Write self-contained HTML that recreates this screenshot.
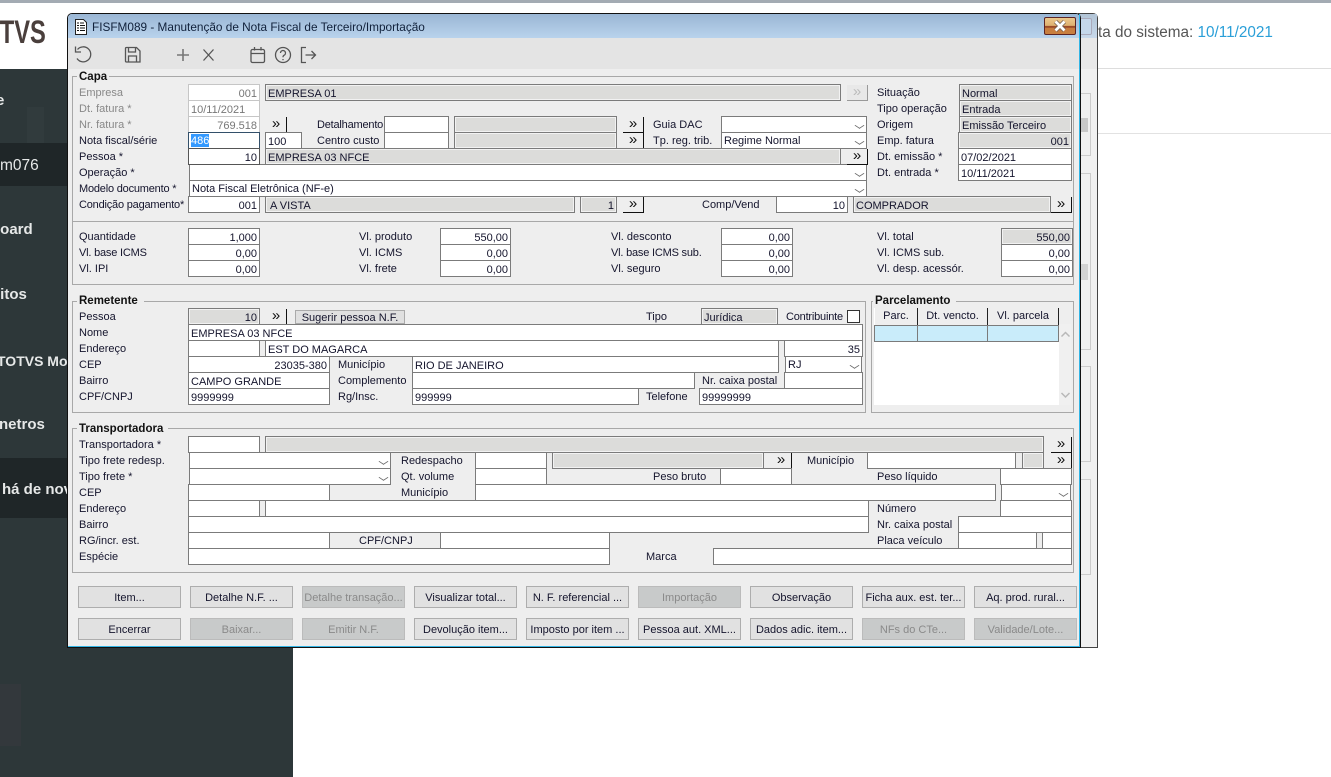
<!DOCTYPE html>
<html><head><meta charset="utf-8"><title>FISFM089</title>
<style>
html,body{margin:0;padding:0;background:#fff}
#p{position:relative;width:1331px;height:777px;overflow:hidden;background:#fff;font-family:"Liberation Sans",sans-serif}
#p div,#p svg{position:absolute;box-sizing:border-box}
.n{color:#e6e8e8;font-size:15px;font-weight:bold;white-space:nowrap;line-height:20px}
#w{left:67px;top:13px;width:1014px;height:635px;background:#eee;border:1px solid #111;border-radius:5px 5px 0 0;overflow:hidden}
#f{left:0;top:0;width:1331px;height:777px;font-size:11px;color:#14142c}
.l{height:16px;line-height:18px;white-space:nowrap}
.x{letter-spacing:-.2px}
.w,.g,.t{height:17px;line-height:18px;padding:0 2px;white-space:nowrap;overflow:hidden;border:1px solid #7b7b7b;background:#fff}
.g{background:#dcdcda;box-shadow:inset 0 0 0 1px #f2f2f2}
.t{border-color:#c6c6c6;color:#777}
.r{text-align:right}
.b{height:16px;width:21px;background:#eee;border-right:1px solid #111;border-bottom:1px solid #111;text-align:center;line-height:14px;font-size:15px;color:#111}
.s{height:17px;line-height:16px;padding:0 2px;background:#fff;border:1px solid #7b7b7b;white-space:nowrap}
.s:after{content:"";position:absolute;right:3px;top:5px;width:6px;height:6px;border-right:1px solid #666;border-bottom:1px solid #666;transform:scaleY(.65) rotate(45deg)}
.lg{font-weight:bold;background:#eee;padding:0 2px;height:14px;line-height:15px;color:#111;font-size:11.5px;white-space:nowrap}
.k{height:22px;width:103px;top:586px;background:#e1e1e1;border:1px solid #adadad;text-align:center;line-height:22px;white-space:nowrap;overflow:hidden;color:#14142c}
.d{background:#c8caca;border-color:#bbb;color:#8a8a8a}
.h{top:308px;height:17px;background:#eee;border-right:1px solid #222;text-align:center;line-height:17px}
.c{top:325px;height:17px;background:#c9ecfa;border:1px solid #7b7b7b}
.bx{left:1081px;width:10px;border:1px solid #ccc;border-left:0}
</style></head><body><div id="p">

<div style="left:0;top:0;width:1331px;height:3px;background:#a3abb3"></div>
<div style="left:1097px;top:68px;width:234px;height:1px;background:#ddd"></div>
<div style="left:1097px;top:133px;width:234px;height:1px;background:#e2e2e2"></div>
<div style="left:1098px;top:23px;font-size:15.3px;line-height:20px;color:#555;white-space:nowrap;width:233px;height:20px">ta do sistema: <span style="color:#2a9fd8">10/11/2021</span></div>

<div style="left:0;top:69px;width:293px;height:708px;background:#2d3739"></div>
<div style="left:27px;top:107px;width:17px;height:36px;background:#313b3d"></div>
<div style="left:0;top:684px;width:21px;height:62px;background:#33383c"></div>
<div style="left:0;top:143px;width:293px;height:43px;background:#1f2628"></div>
<div style="left:0;top:458px;width:293px;height:60px;background:#1f2628"></div>
<div style="left:-60px;top:12px;width:105px;height:40px;line-height:40px;font-size:32px;font-weight:bold;color:#4a3f3c;text-align:right;transform:scaleX(.74);transform-origin:right center">TOTVS</div>
<div class="n" style="left:-4px;top:91px;height:20px;width:20px">e</div>
<div class="n" style="left:0;top:156px;height:20px;width:60px;font-size:15.5px;font-weight:normal">m076</div>
<div class="n" style="left:-9px;top:220px;height:20px;width:60px">board</div>
<div class="n" style="left:-9px;top:285px;height:20px;width:60px">ditos</div>
<div class="n" style="left:-3px;top:351px;height:20px;width:90px;font-size:14px">TOTVS Mo</div>
<div class="n" style="left:-1px;top:415px;height:20px;width:70px">netros</div>
<div class="n" style="left:2px;top:480px;height:20px;width:90px">há de nov</div>

<div style="left:1078px;top:13px;width:20px;height:635px;background:#f0f0f0;border:1px solid #444;border-radius:0 5px 0 0"></div>
<div style="left:1079px;top:14px;width:18px;height:24px;background:linear-gradient(#b2c4d6,#c7d8ea)"></div>
<div style="left:1081px;top:18px;width:11px;height:17px;background:#c4d7ea;border:1px solid #aab;border-left:0;border-radius:0 2px 2px 0"></div>
<div style="left:1079px;top:38px;width:18px;height:31px;background:#e8e8e8"></div>
<div class="bx" style="top:93px;height:63px"></div>
<div style="left:1081px;top:118px;width:7px;height:14px;background:#c8c8c8"></div>
<div class="bx" style="top:173px;height:177px"></div>
<div style="left:1081px;top:264px;width:7px;height:16px;background:#d2d2d2"></div>
<div class="bx" style="top:366px;height:96px"></div>
<div class="bx" style="top:479px;height:96px"></div>

<div id="w"></div>
<div style="left:68px;top:14px;width:1012px;height:24px;background:linear-gradient(#9ab6d4,#b9d3ec);border-radius:4px 4px 0 0"></div>
<div style="left:68px;top:38px;width:1011px;height:31px;background:#e4e4e4"></div>
<div style="left:1079px;top:14px;width:1px;height:633px;background:#33b5e5"></div>
<div style="left:68px;top:646px;width:1012px;height:1px;background:#33b5e5"></div>

<svg style="left:74px;top:19px" width="14" height="16" viewBox="0 0 14 16"><path d="M1.500.5h8l3 3v12h-11z" fill="#fff" stroke="#222"/><path d="M3 4h2M6 4h4M3 6.500h2M6 6.500h5M3 9h2M6 9h5M3 11.500h2M6 11.500h5" stroke="#111" fill="none"/></svg>
<div style="left:92px;top:19px;width:400px;height:16px;line-height:16px;font-size:11.8px;color:#10203a;white-space:nowrap">FISFM089 - Manutenção de Nota Fiscal de Terceiro/Importação</div>
<div style="left:1044px;top:17px;width:32px;height:18px;border:1px solid #5c2424;border-radius:2px;background:linear-gradient(#ecc88c 0,#deb070 48%,#9a4a28 50%,#9a4a28 60%,#c67a3e 62%,#c98040 100%)"></div>
<svg style="left:1052px;top:20px" width="16" height="12" viewBox="0 0 16 12"><path d="M3.500 1.500l9 9M12.500 1.500l-9 9" stroke="#6b5a50" stroke-width="4.200" fill="none"/><path d="M3.500 1.500l9 9M12.500 1.500l-9 9" stroke="#fff" stroke-width="2.800" fill="none"/></svg>

<svg style="left:72px;top:44px" width="250" height="22" viewBox="0 0 250 22" fill="none" stroke="#555" stroke-width="1.300">
<path d="M5.500 5.500A7.500 7.500 0 1 1 5 14.500"/><path d="M3.500 2.500v5.500h5.500"/>
<path d="M54.500 3.500h10l3.500 3.500v11h-13.500q-1 0-1-1v-12.500q0-1 1-1z"/><path d="M56.500 3.500v4.500h7v-4.500M56.500 18.500v-6.500h8v6.500"/>
<path d="M111 5v12M105 11h12" stroke="#777" stroke-width="1.600"/>
<path d="M131.500 5.500l10 11M141.500 5.500l-10 11"/>
<rect x="179" y="5.500" width="13.500" height="13" rx="1.500"/><path d="M179 9.500h13.500M182.500 3v3.500M189 3v3.500"/>
<circle cx="211" cy="11" r="7.500"/><path d="M208.500 9a2.500 2.500 0 1 1 3.500 2.300q-1 .5-1 2"/><path d="M211 15v1.200"/>
<path d="M234 3.500h-4.500v15h4.500M233.500 11h10M239.500 7l4 4-4 4"/>
</svg>

<div id="f">
<!-- group frames -->
<div style="left:72px;top:76px;width:1002px;height:209px;border:1px solid #a8a8a8"></div>
<div style="left:72px;top:221px;width:1002px;height:1px;background:#a8a8a8"></div>
<div style="left:72px;top:301px;width:794px;height:112px;border:1px solid #a8a8a8"></div>
<div style="left:871px;top:301px;width:203px;height:112px;border:1px solid #a8a8a8"></div>
<div style="left:72px;top:428px;width:1002px;height:145px;border:1px solid #a8a8a8"></div>
<div class="lg" style="left:77px;top:70px;width:32px">Capa</div>
<div class="lg" style="left:77px;top:294px;width:67px">Remetente</div>
<div class="lg" style="left:873px;top:294px;width:83px">Parcelamento</div>
<div class="lg" style="left:77px;top:422px;width:91px">Transportadora</div>

<!-- capa labels -->
<div class="l" style="left:79px;top:84px;width:100px;color:#888">Empresa</div>
<div class="l" style="left:79px;top:100px;width:100px;color:#888">Dt. fatura *</div>
<div class="l" style="left:79px;top:116px;width:100px;color:#888">Nr. fatura *</div>
<div class="l" style="left:79px;top:132px;width:100px">Nota fiscal/série</div>
<div class="l" style="left:79px;top:148px;width:100px">Pessoa *</div>
<div class="l" style="left:79px;top:164px;width:100px">Operação *</div>
<div class="l x" style="left:79px;top:180px;width:105px">Modelo documento *</div>
<div class="l x" style="left:79px;top:196px;width:108px">Condição pagamento*</div>
<div class="l x" style="left:317px;top:116px;width:66px">Detalhamento</div>
<div class="l" style="left:317px;top:132px;width:66px">Centro custo</div>
<div class="l" style="left:653px;top:116px;width:66px">Guia DAC</div>
<div class="l" style="left:653px;top:132px;width:66px">Tp. reg. trib.</div>
<div class="l" style="left:702px;top:196px;width:66px">Comp/Vend</div>
<div class="l" style="left:877px;top:84px;width:76px">Situação</div>
<div class="l" style="left:877px;top:100px;width:76px">Tipo operação</div>
<div class="l" style="left:877px;top:116px;width:76px">Origem</div>
<div class="l" style="left:877px;top:132px;width:76px">Emp. fatura</div>
<div class="l" style="left:877px;top:148px;width:76px">Dt. emissão *</div>
<div class="l" style="left:877px;top:164px;width:76px">Dt. entrada *</div>

<!-- capa fields -->
<div class="t r" style="left:188px;top:84px;width:72px">001</div>
<div class="g" style="left:265px;top:84px;width:576px">EMPRESA 01</div>
<div class="b" style="left:847px;top:85px;color:#bbb;border-color:#999;background:#e8e8e8">»</div>
<div class="t" style="left:188px;top:100px;width:72px">10/11/2021</div>
<div class="t r" style="left:188px;top:116px;width:72px">769.518</div>
<div class="b" style="left:266px;top:117px">»</div>
<div class="w" style="left:384px;top:116px;width:65px"></div>
<div class="g" style="left:454px;top:116px;width:163px"></div>
<div class="b" style="left:623px;top:117px">»</div>
<div class="s" style="left:721px;top:116px;width:146px"></div>
<div class="w" style="left:188px;top:132px;width:72px;border-color:#33506a;padding:0"><div style="left:2px;top:1px;background:#3399ff;color:#fff;width:18px;height:13px;line-height:14px">486</div></div>
<div class="w" style="left:265px;top:132px;width:37px">100</div>
<div class="w" style="left:384px;top:132px;width:65px"></div>
<div class="g" style="left:454px;top:132px;width:163px"></div>
<div class="b" style="left:623px;top:133px">»</div>
<div class="s" style="left:721px;top:132px;width:146px">Regime Normal</div>
<div class="s" style="left:189px;top:164px;width:678px"></div>
<div class="s" style="left:189px;top:180px;width:678px">Nota Fiscal Eletrônica (NF-e)</div>
<div class="w r" style="left:188px;top:148px;width:72px;border-color:#555">10</div>
<div class="g" style="left:265px;top:148px;width:576px">EMPRESA 03 NFCE</div>
<div class="b" style="left:847px;top:149px">»</div>
<div class="w r" style="left:188px;top:196px;width:72px">001</div>
<div class="g" style="left:265px;top:196px;width:310px;padding-left:4px">A VISTA</div>
<div class="g r" style="left:580px;top:196px;width:37px">1</div>
<div class="b" style="left:623px;top:197px">»</div>
<div class="w r" style="left:776px;top:196px;width:72px">10</div>
<div class="g" style="left:853px;top:196px;width:198px">COMPRADOR</div>
<div class="b" style="left:1051px;top:197px">»</div>
<div class="g" style="left:959px;top:84px;width:113px">Normal</div>
<div class="g" style="left:959px;top:100px;width:113px">Entrada</div>
<div class="g" style="left:959px;top:116px;width:113px">Emissão Terceiro</div>
<div class="g r" style="left:958px;top:132px;width:114px">001</div>
<div class="w" style="left:958px;top:148px;width:114px">07/02/2021</div>
<div class="w" style="left:958px;top:164px;width:114px">10/11/2021</div>

<!-- valores -->
<div class="l" style="left:79px;top:228px;width:100px">Quantidade</div>
<div class="l x" style="left:79px;top:244px;width:100px">Vl. base ICMS</div>
<div class="l" style="left:79px;top:260px;width:100px">Vl. IPI</div>
<div class="l" style="left:359px;top:228px;width:76px">Vl. produto</div>
<div class="l" style="left:359px;top:244px;width:76px">Vl. ICMS</div>
<div class="l" style="left:359px;top:260px;width:76px">Vl. frete</div>
<div class="l" style="left:611px;top:228px;width:100px">Vl. desconto</div>
<div class="l x" style="left:611px;top:244px;width:100px">Vl. base ICMS sub.</div>
<div class="l" style="left:611px;top:260px;width:100px">Vl. seguro</div>
<div class="l" style="left:877px;top:228px;width:100px">Vl. total</div>
<div class="l" style="left:877px;top:244px;width:100px">Vl. ICMS sub.</div>
<div class="l" style="left:877px;top:260px;width:120px">Vl. desp. acessór.</div>
<div class="w r" style="left:188px;top:228px;width:72px">1,000</div>
<div class="w r" style="left:188px;top:244px;width:72px">0,00</div>
<div class="w r" style="left:188px;top:260px;width:72px">0,00</div>
<div class="w r" style="left:440px;top:228px;width:71px">550,00</div>
<div class="w r" style="left:440px;top:244px;width:71px">0,00</div>
<div class="w r" style="left:440px;top:260px;width:71px">0,00</div>
<div class="w r" style="left:721px;top:228px;width:72px">0,00</div>
<div class="w r" style="left:721px;top:244px;width:72px">0,00</div>
<div class="w r" style="left:721px;top:260px;width:72px">0,00</div>
<div class="g r" style="left:1001px;top:228px;width:72px">550,00</div>
<div class="w r" style="left:1001px;top:244px;width:72px">0,00</div>
<div class="w r" style="left:1001px;top:260px;width:72px">0,00</div>

<!-- remetente -->
<div class="l" style="left:79px;top:308px;width:100px">Pessoa</div>
<div class="l" style="left:79px;top:324px;width:100px">Nome</div>
<div class="l" style="left:79px;top:340px;width:100px">Endereço</div>
<div class="l" style="left:79px;top:356px;width:100px">CEP</div>
<div class="l" style="left:79px;top:372px;width:100px">Bairro</div>
<div class="l" style="left:79px;top:388px;width:100px">CPF/CNPJ</div>
<div class="g r" style="left:188px;top:308px;width:72px">10</div>
<div class="b" style="left:266px;top:309px">»</div>
<div style="left:295px;top:310px;width:110px;height:14px;background:#e0e0e0;border:1px solid #aaa;text-align:center;line-height:14px;white-space:nowrap">Sugerir pessoa N.F.</div>
<div class="l" style="left:646px;top:308px;width:40px">Tipo</div>
<div class="g" style="left:701px;top:308px;width:77px">Jurídica</div>
<div class="l x" style="left:786px;top:308px;width:60px">Contribuinte</div>
<div style="left:847px;top:310px;width:13px;height:13px;background:#fff;border:1px solid #333"></div>
<div class="w" style="left:188px;top:324px;width:675px">EMPRESA 03 NFCE</div>
<div class="w" style="left:188px;top:340px;width:72px"></div>
<div class="w" style="left:265px;top:340px;width:514px">EST DO MAGARCA</div>
<div class="w r" style="left:784px;top:340px;width:79px">35</div>
<div class="w r" style="left:188px;top:356px;width:142px">23035-380</div>
<div class="l" style="left:338px;top:356px;width:70px">Município</div>
<div class="w" style="left:412px;top:356px;width:367px">RIO DE JANEIRO</div>
<div class="s" style="left:785px;top:356px;width:77px">RJ</div>
<div class="w" style="left:188px;top:372px;width:142px">CAMPO GRANDE</div>
<div class="l" style="left:338px;top:372px;width:70px">Complemento</div>
<div class="w" style="left:412px;top:372px;width:283px"></div>
<div class="l" style="left:702px;top:372px;width:80px">Nr. caixa postal</div>
<div class="w" style="left:784px;top:372px;width:79px"></div>
<div class="w" style="left:188px;top:388px;width:142px">9999999</div>
<div class="l" style="left:338px;top:388px;width:70px">Rg/Insc.</div>
<div class="w" style="left:412px;top:388px;width:227px">999999</div>
<div class="l" style="left:646px;top:388px;width:50px">Telefone</div>
<div class="w" style="left:699px;top:388px;width:164px">99999999</div>

<!-- parcelamento -->
<div style="left:874px;top:308px;width:185px;height:97px;background:#fff"></div>
<div style="left:1059px;top:324px;width:12px;height:81px;background:#f0f0f0"></div>
<div class="h" style="left:875px;width:43px">Parc.</div>
<div class="h" style="left:918px;width:70px">Dt. vencto.</div>
<div class="h" style="left:988px;width:71px">Vl. parcela</div>
<div class="c" style="left:874px;width:44px"></div>
<div class="c" style="left:917px;width:71px"></div>
<div class="c" style="left:987px;width:72px"></div>
<svg style="left:1060px;top:329px" width="11" height="72" viewBox="0 0 11 72" fill="none" stroke="#b8b8b8" stroke-width="1.500"><path d="M1.500 7.500l4-4 4 4M1.500 64l4 4 4-4"/></svg>

<!-- transportadora -->
<div class="l" style="left:79px;top:436px;width:100px">Transportadora *</div>
<div class="l" style="left:79px;top:452px;width:100px">Tipo frete redesp.</div>
<div class="l" style="left:79px;top:468px;width:100px">Tipo frete *</div>
<div class="l" style="left:79px;top:484px;width:100px">CEP</div>
<div class="l" style="left:79px;top:500px;width:100px">Endereço</div>
<div class="l" style="left:79px;top:516px;width:100px">Bairro</div>
<div class="l" style="left:79px;top:532px;width:100px">RG/incr. est.</div>
<div class="l" style="left:79px;top:548px;width:100px">Espécie</div>

<div class="w" style="left:188px;top:436px;width:72px"></div>
<div class="g" style="left:265px;top:436px;width:779px"></div>
<div class="b" style="left:1051px;top:437px">»</div>
<div class="s" style="left:189px;top:452px;width:202px"></div>
<div class="s" style="left:189px;top:468px;width:202px"></div>
<div class="l" style="left:401px;top:452px;width:70px">Redespacho</div>
<div class="l" style="left:401px;top:468px;width:70px">Qt. volume</div>
<div class="l" style="left:401px;top:484px;width:70px">Município</div>
<div class="w" style="left:475px;top:452px;width:72px"></div>
<div class="g" style="left:552px;top:452px;width:212px"></div>
<div class="b" style="left:771px;top:453px">»</div>
<div class="l" style="left:807px;top:452px;width:55px">Município</div>
<div class="w" style="left:867px;top:452px;width:149px"></div>
<div class="g" style="left:1022px;top:452px;width:22px"></div>
<div class="b" style="left:1051px;top:453px">»</div>
<div class="w" style="left:475px;top:468px;width:72px"></div>
<div class="l" style="left:653px;top:468px;width:64px">Peso bruto</div>
<div class="w" style="left:720px;top:468px;width:72px"></div>
<div class="l" style="left:877px;top:468px;width:64px">Peso líquido</div>
<div class="w" style="left:1000px;top:468px;width:72px"></div>
<div class="w" style="left:188px;top:484px;width:142px"></div>
<div class="w" style="left:475px;top:484px;width:521px"></div>
<div class="s" style="left:1001px;top:484px;width:70px"></div>
<div class="w" style="left:188px;top:500px;width:72px"></div>
<div class="w" style="left:265px;top:500px;width:604px"></div>
<div class="l" style="left:877px;top:500px;width:64px">Número</div>
<div class="w" style="left:1000px;top:500px;width:72px"></div>
<div class="w" style="left:188px;top:516px;width:681px"></div>
<div class="l" style="left:877px;top:516px;width:80px">Nr. caixa postal</div>
<div class="w" style="left:958px;top:516px;width:114px"></div>
<div class="w" style="left:188px;top:532px;width:142px"></div>
<div class="l" style="left:359px;top:532px;width:64px">CPF/CNPJ</div>
<div class="w" style="left:440px;top:532px;width:170px"></div>
<div class="l" style="left:877px;top:532px;width:80px">Placa veículo</div>
<div class="w" style="left:958px;top:532px;width:79px"></div>
<div class="w" style="left:1042px;top:532px;width:30px"></div>
<div class="w" style="left:188px;top:548px;width:422px"></div>
<div class="l" style="left:646px;top:548px;width:50px">Marca</div>
<div class="w" style="left:713px;top:548px;width:359px"></div>

<!-- buttons -->
<div class="k" style="left:78px">Item...</div>
<div class="k" style="left:190px">Detalhe N.F. ...</div>
<div class="k d" style="left:302px">Detalhe transação...</div>
<div class="k" style="left:414px">Visualizar total...</div>
<div class="k" style="left:526px">N. F. referencial ...</div>
<div class="k d" style="left:638px">Importação</div>
<div class="k" style="left:750px">Observação</div>
<div class="k" style="left:862px">Ficha aux. est. ter...</div>
<div class="k" style="left:974px">Aq. prod. rural...</div>
<div class="k" style="left:78px;top:618px">Encerrar</div>
<div class="k d" style="left:190px;top:618px">Baixar...</div>
<div class="k d" style="left:302px;top:618px">Emitir N.F.</div>
<div class="k" style="left:414px;top:618px">Devolução item...</div>
<div class="k" style="left:526px;top:618px">Imposto por item ...</div>
<div class="k" style="left:638px;top:618px">Pessoa aut. XML...</div>
<div class="k" style="left:750px;top:618px">Dados adic. item...</div>
<div class="k d" style="left:862px;top:618px">NFs do CTe...</div>
<div class="k d" style="left:974px;top:618px">Validade/Lote...</div>
</div>
</div></body></html>
